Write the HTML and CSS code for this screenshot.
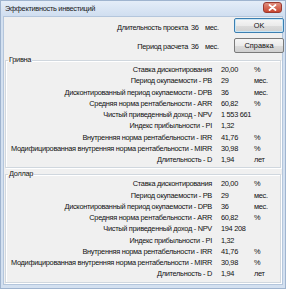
FILE: index.html
```html
<!DOCTYPE html>
<html lang="ru">
<head>
<meta charset="utf-8">
<link rel="stylesheet" href="styles.css">
</head>
<body>
<div class="window">
  <div class="titlebar">
    <span class="title">Эффективность инвестиций</span>
    <div class="close"><svg width="9" height="7" viewBox="0 0 9 7"><path d="M1.5 1 L7.5 6 M7.5 1 L1.5 6" stroke="#fff" stroke-width="1.8" stroke-linecap="round"/></svg></div>
  </div>
  <div class="client">
    <div class="top">
      <div class="top-grid">
        <span class="lbl">Длительность проекта</span><span class="val">36</span><span class="unit">мес.</span>
        <span class="lbl">Период расчета</span><span class="val">36</span><span class="unit">мес.</span>
      </div>
      <div class="buttons">
        <div class="btn btn-default">OK</div>
        <div class="btn">Справка</div>
      </div>
    </div>
    <fieldset class="group">
      <legend>Гривна</legend>
      <div class="rows">
        <span class="lbl">Ставка дисконтирования</span><span class="val">20,00</span><span class="unit">%</span>
        <span class="lbl">Период окупаемости - PB</span><span class="val">29</span><span class="unit">мес.</span>
        <span class="lbl">Дисконтированный период окупаемости - DPB</span><span class="val">36</span><span class="unit">мес.</span>
        <span class="lbl">Средняя норма рентабельности - ARR</span><span class="val">60,82</span><span class="unit">%</span>
        <span class="lbl">Чистый приведенный доход - NPV</span><span class="val">1 553 661</span><span class="unit"></span>
        <span class="lbl">Индекс прибыльности - PI</span><span class="val">1,32</span><span class="unit"></span>
        <span class="lbl">Внутренняя норма рентабельности - IRR</span><span class="val">41,76</span><span class="unit">%</span>
        <span class="lbl">Модифицированная внутренняя норма рентабельности - MIRR</span><span class="val">30,98</span><span class="unit">%</span>
        <span class="lbl">Длительность - D</span><span class="val">1,94</span><span class="unit">лет</span>
      </div>
    </fieldset>
    <fieldset class="group">
      <legend>Доллар</legend>
      <div class="rows">
        <span class="lbl">Ставка дисконтирования</span><span class="val">20,00</span><span class="unit">%</span>
        <span class="lbl">Период окупаемости - PB</span><span class="val">29</span><span class="unit">мес.</span>
        <span class="lbl">Дисконтированный период окупаемости - DPB</span><span class="val">36</span><span class="unit">мес.</span>
        <span class="lbl">Средняя норма рентабельности - ARR</span><span class="val">60,82</span><span class="unit">%</span>
        <span class="lbl">Чистый приведенный доход - NPV</span><span class="val">194 208</span><span class="unit"></span>
        <span class="lbl">Индекс прибыльности - PI</span><span class="val">1,32</span><span class="unit"></span>
        <span class="lbl">Внутренняя норма рентабельности - IRR</span><span class="val">41,76</span><span class="unit">%</span>
        <span class="lbl">Модифицированная внутренняя норма рентабельности - MIRR</span><span class="val">30,98</span><span class="unit">%</span>
        <span class="lbl">Длительность - D</span><span class="val">1,94</span><span class="unit">лет</span>
      </div>
    </fieldset>
  </div>
</div>
</body>
</html>
```
FILE: styles.css
```css
* { box-sizing: border-box; }
html, body { margin: 0; padding: 0; }
body {
  width: 286px;
  height: 289px;
  overflow: hidden;
  background: #d3e0f0;
  font-family: "Liberation Sans", Arial, sans-serif;
  font-size: 7.4px;
  letter-spacing: -0.3px;
  color: #111;
}
.window {
  width: 286px;
  height: 289px;
  background: #d3e0f0;
  border: 1px solid #9fb4cf;
  display: flex;
  flex-direction: column;
}
.titlebar {
  height: 15px;
  flex: none;
  display: flex;
  align-items: center;
  justify-content: space-between;
  padding: 0 3px 0 4px;
  background: linear-gradient(#e4edf8, #d0def0);
}
.title { color: #1a1a1a; }
.close {
  width: 19px;
  height: 11px;
  margin-top: -2px;
  border: 1px solid #9a3a30;
  border-radius: 3px;
  background: linear-gradient(#e08f7f, #c9452f);
  display: flex;
  align-items: center;
  justify-content: center;
}
.client {
  flex: 1;
  margin: 0 2px 3px 2px;
  background: #f0f0f0;
  border: 1px solid #b4c6dc;
  padding: 0 1px 0 1px;
  display: flex;
  flex-direction: column;
}
.top {
  display: flex;
  height: 39px;
  padding-top: 1px;
}
.top-grid {
  display: grid;
  grid-template-columns: 186px 14px 14px;
  grid-auto-rows: 19px;
  align-items: center;
}
.top-grid .lbl { text-align: right; padding-right: 3px; white-space: nowrap; }
.buttons {
  margin-left: 15px;
  display: flex;
  flex-direction: column;
  gap: 5px;
}
.btn {
  width: 50px;
  height: 15px;
  border: 1px solid #7a7a7a;
  border-radius: 2px;
  background: linear-gradient(#f6f6f6 0%, #ebebeb 50%, #dcdcdc 51%, #d0d0d0 100%);
  display: flex;
  align-items: center;
  justify-content: center;
  color: #111;
  letter-spacing: 0;
}
.btn-default {
  border-color: #3c7fb1;
  box-shadow: inset 0 0 0 1px #c8e6f6;
}
.group {
  margin: 0;
  padding: 0 0 2px 0;
  border: 1px solid #d0d7de;
  box-shadow: inset 1px 1px 0 #fff, 1px 1px 0 #fff;
}
.group + .group { margin-top: 2px; }
.group legend {
  padding: 0 1px;
  margin-left: 2px;
  line-height: 8px;
}
.rows {
  display: grid;
  grid-template-columns: 206px 42px 1fr;
  grid-auto-rows: 11.25px;
  align-items: center;
}
.rows .lbl { text-align: right; white-space: nowrap; }
.rows .val { padding-left: 9px; white-space: nowrap; }
.rows .unit { white-space: nowrap; }
```
